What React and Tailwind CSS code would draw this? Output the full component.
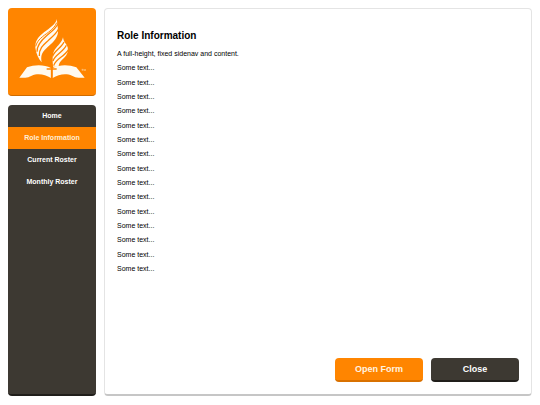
import { useState } from "react";

const navItems = ["Home", "Role Information", "Current Roster", "Monthly Roster"];
const lines = Array.from({ length: 15 }, () => "Some text...");

function Logo() {
  return (
    <svg viewBox="25 25 264 262" className="block w-full" role="img" aria-label="Church logo">
      <g fill="#fffaf0">
        <path d="M172 58C168 74 150 85 133 98C113 114 106 126 107 144C109 162 117 178 126 188C123 171 125 160 138 148C157 131 173 118 175 98C176 84 172 78 172 58Z" />
        <path d="M190 113C187 128 174 138 166 149C157 162 159 180 160 201L177 202C177 190 184 183 193 175C203 165 207 155 204 143C200 132 192 128 190 113Z" />
        <path d="M59 234L82 203C105 194 134 194 154 205V235C136 223 113 220 96 228C89 232 83 234 77 234Z" />
        <path d="M255 234L230 203C207 194 180 194 159 205V235C177 223 200 220 217 228C224 232 230 234 237 234Z" />
      </g>
      <g fill="none" stroke="#ff8500" strokeWidth="4">
        <path d="M112 156C112 136 126 121 140 109C155 96 168 87 175 72" />
        <path d="M119 169C117 148 130 136 145 123C159 110 170 102 177 87" />
        <path d="M108 140C113 120 131 109 146 98C158 89 167 80 171 69" strokeWidth="3" />
        <path d="M159 170C163 153 185 145 193 127" />
        <path d="M160 184C165 165 191 158 200 137" />
        <path d="M162 198C167 178 195 171 207 149" />
      </g>
      <path d="M156 194V234M141 208H171" fill="none" stroke="#ff8500" strokeWidth="5" />
      <path d="M246 209H251M248 209V214M253 214V209L255 212L257 209V214" fill="none" stroke="#ffe0b8" strokeWidth="1.5" />
    </svg>
  );
}

function Sidebar({ active, onSelect }) {
  return (
    <aside className="flex w-[88px] shrink-0 flex-col gap-[9px]">
      <div className="overflow-hidden rounded border-b border-[#cf6c00] bg-[#ff8500]">
        <Logo />
      </div>
      <nav className="flex-1 overflow-hidden rounded border-b-2 border-[#201e1a] bg-[#3d3932]">
        {navItems.map((item) => (
          <a
            key={item}
            href="#"
            onClick={() => onSelect(item)}
            className={
              item === active
                ? "block bg-[#ff8500] py-[6px] text-center text-[7px] leading-[10px] font-bold text-[#ffeed6]"
                : "block py-[6px] text-center text-[7px] leading-[10px] font-bold text-white"
            }
          >
            {item}
          </a>
        ))}
      </nav>
    </aside>
  );
}

function App() {
  const [active, setActive] = useState("Role Information");

  return (
    <div className="flex h-screen gap-2 bg-white px-2 pt-2 pb-[9px] font-['Liberation_Sans',Arial,sans-serif] text-black">
      <Sidebar active={active} onSelect={setActive} />

      <main className="flex flex-1 flex-col rounded border border-b-2 border-[#e4e4e4] border-b-[#c6c6c6] bg-white p-3">
        <h1 className="mt-2 text-[10px] leading-[14px] font-bold">Role Information</h1>
        <div className="mt-[6px] flex h-[225px] flex-col justify-between text-[7px] leading-[10px]">
          <p>A full-height, fixed sidenav and content.</p>
          {lines.map((line, index) => (
            <p key={index}>{line}</p>
          ))}
        </div>

        <div className="mt-auto flex justify-end gap-2">
          <button className="h-6 w-[88px] rounded border-b-2 border-[#d97100] bg-[#ff8500] pt-[2px] text-[9px] font-bold text-[#fff3e0]">
            Open Form
          </button>
          <button className="h-6 w-[88px] rounded border-b-2 border-[#201e1a] bg-[#3d3932] pt-[2px] text-[9px] font-bold text-white">
            Close
          </button>
        </div>
      </main>
    </div>
  );
}

export default App;
